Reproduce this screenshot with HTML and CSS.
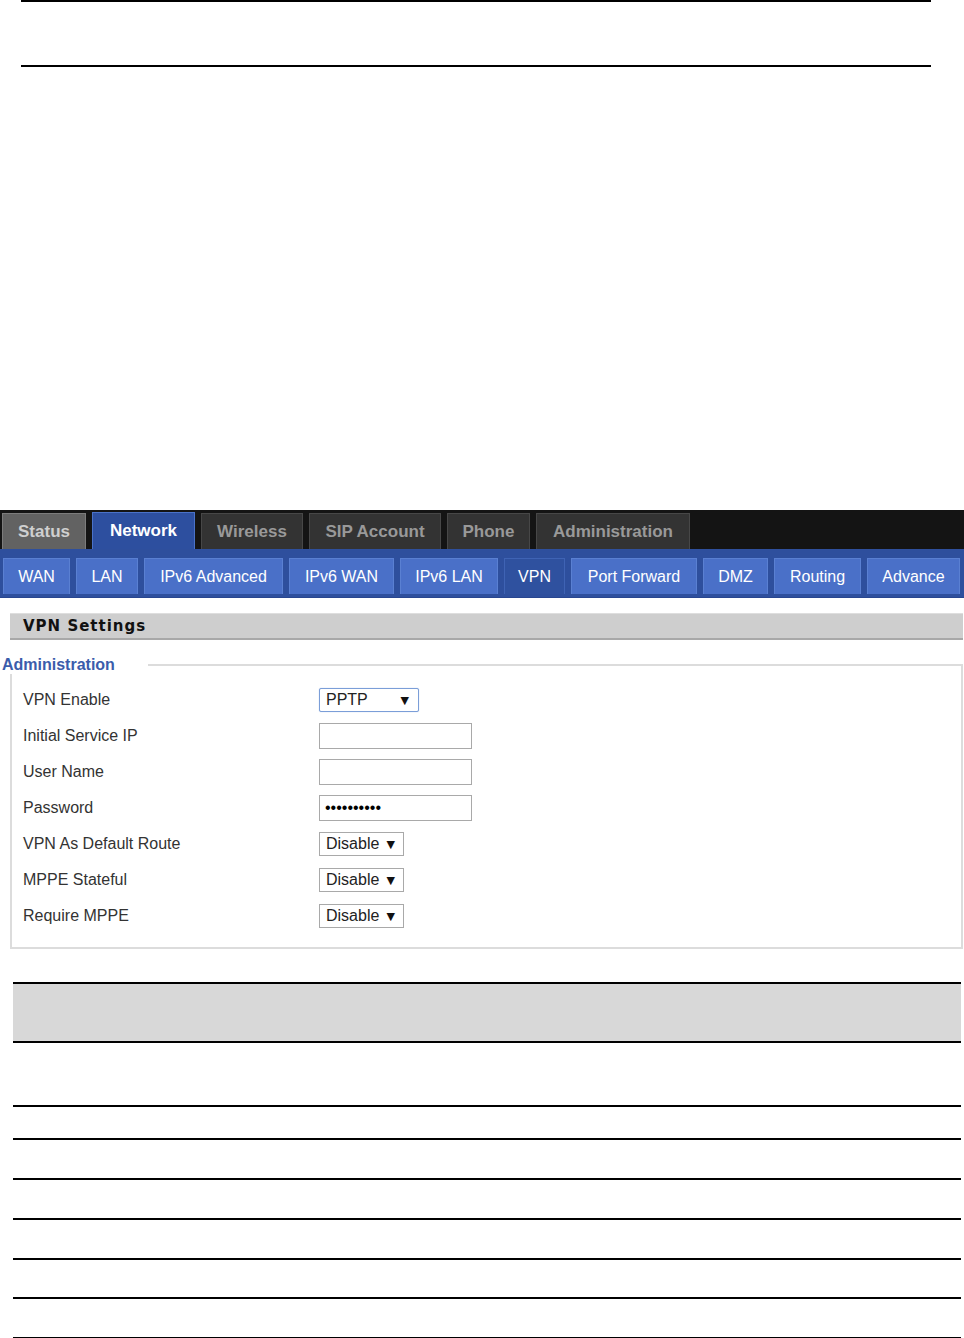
FILE: index.html
```html
<!DOCTYPE html>
<html lang="en">
  <head>
    <meta charset="UTF-8" />
    <title>VPN Settings</title>
    <link rel="stylesheet" href="styles.css">
  </head>
  <body>
    <div class="doc-top"></div>

    <div class="main-nav">
      <a class="tab tab-status">Status</a>
      <a class="tab tab-active">Network</a>
      <a class="tab">Wireless</a>
      <a class="tab">SIP Account</a>
      <a class="tab">Phone</a>
      <a class="tab">Administration</a>
    </div>
    <div class="sub-nav">
      <a class="subtab">WAN</a>
      <a class="subtab">LAN</a>
      <a class="subtab">IPv6 Advanced</a>
      <a class="subtab">IPv6 WAN</a>
      <a class="subtab">IPv6 LAN</a>
      <a class="subtab subtab-active">VPN</a>
      <a class="subtab">Port Forward</a>
      <a class="subtab">DMZ</a>
      <a class="subtab">Routing</a>
      <a class="subtab">Advance</a>
    </div>

    <div class="section-title">VPN Settings</div>

    <fieldset class="admin-box">
      <legend>Administration</legend>
      <div class="form-row">
        <label>VPN Enable</label>
        <div class="select select-focus"><span>PPTP</span><span class="arrow">&#9660;</span></div>
      </div>
      <div class="form-row">
        <label>Initial Service IP</label>
        <input type="text" class="text-input" />
      </div>
      <div class="form-row">
        <label>User Name</label>
        <input type="text" class="text-input" />
      </div>
      <div class="form-row">
        <label>Password</label>
        <input type="password" class="text-input" value="1234567890" />
      </div>
      <div class="form-row">
        <label>VPN As Default Route</label>
        <div class="select"><span>Disable</span><span class="arrow">&#9660;</span></div>
      </div>
      <div class="form-row">
        <label>MPPE Stateful</label>
        <div class="select"><span>Disable</span><span class="arrow">&#9660;</span></div>
      </div>
      <div class="form-row">
        <label>Require MPPE</label>
        <div class="select"><span>Disable</span><span class="arrow">&#9660;</span></div>
      </div>
    </fieldset>

    <div class="doc-table">
      <div class="doc-head"></div>
      <div class="doc-row row-tall"></div>
      <div class="doc-row row-short"></div>
      <div class="doc-row"></div>
      <div class="doc-row"></div>
      <div class="doc-row"></div>
      <div class="doc-row row-39"></div>
      <div class="doc-row"></div>
    </div>
  </body>
</html>
```

FILE: styles.css
```css
body {
  margin: 0;
  font-family: "Liberation Sans", Arial, sans-serif;
  font-size: 16px;
  color: #222;
  background-color: #fff;
}

.doc-top {
  margin: 0 33px 443px 21px;
  height: 63px;
  border-top: 2px solid #000;
  border-bottom: 2px solid #000;
}

/* top menu */
.main-nav {
  display: flex;
  align-items: flex-end;
  height: 39px;
  padding-left: 2px;
  background-color: #141414;
}

.tab {
  box-sizing: border-box;
  display: flex;
  flex-shrink: 0;
  align-items: center;
  justify-content: center;
  height: 36px;
  margin-right: 6px;
  background-color: #333;
  border: 1px solid #474747;
  border-bottom: none;
  color: #999;
  font-weight: bold;
  font-size: 17px;
  white-space: nowrap;
}

.tab:nth-child(1) { width: 84px; }
.tab:nth-child(2) { width: 103px; }
.tab:nth-child(3) { width: 102px; }
.tab:nth-child(4) { width: 132px; }
.tab:nth-child(5) { width: 83px; }
.tab:nth-child(6) { width: 154px; }

.tab-status {
  background-color: #626262;
  border-color: #7c7c7c;
  color: #cfcfcf;
}

.tab-active {
  height: 37px;
  background-color: #2d4f9f;
  border-color: #4a72c8;
  color: #fff;
}

.sub-nav {
  display: flex;
  height: 39px;
  padding: 9px 0 0 3px;
  background-color: #2e4f9d;
  border-bottom: 1px solid #284690;
}

.subtab {
  box-sizing: border-box;
  display: flex;
  flex-shrink: 0;
  align-items: center;
  justify-content: center;
  height: 36px;
  margin-right: 6px;
  background-color: #4a70c8;
  border: 1px solid #5a80d2;
  border-bottom: none;
  color: #fff;
  font-size: 16px;
  white-space: nowrap;
}

.subtab:nth-child(1) { width: 67px; }
.subtab:nth-child(2) { width: 62px; }
.subtab:nth-child(3) { width: 139px; }
.subtab:nth-child(4) { width: 105px; }
.subtab:nth-child(5) { width: 98px; }
.subtab:nth-child(6) { width: 61px; }
.subtab:nth-child(7) { width: 126px; }
.subtab:nth-child(8) { width: 65px; }
.subtab:nth-child(9) { width: 87px; }
.subtab:nth-child(10) { width: 93px; }

.subtab-active {
  background-color: #2f519f;
  border-color: #3f63b4;
}

/* page content */
.section-title {
  margin: 15px 1px 0 10px;
  height: 24px;
  line-height: 25px;
  padding-left: 13px;
  background-color: #cecece;
  border-top: 1px solid #dedede;
  border-bottom: 2px solid #a8a8a8;
  font-family: "DejaVu Sans", Verdana, sans-serif;
  font-size: 15px;
  font-weight: bold;
  letter-spacing: 1px;
  color: #111;
}

.admin-box {
  margin: 16px 1px 0 10px;
  padding: 8px 12px 13px 11px;
  border: 2px solid #dcdcdc;
}

.admin-box legend {
  margin-left: -21px;
  padding: 0 33px 0 0;
  color: #3b5cab;
  font-weight: bold;
  font-size: 16px;
}

.form-row {
  display: flex;
  align-items: center;
  height: 36px;
}

.form-row label {
  width: 296px;
  color: #333;
}

.text-input {
  box-sizing: border-box;
  width: 153px;
  height: 26px;
  margin: 0;
  padding: 0 5px;
  border: 1px solid #a9a9a9;
  font-size: 16px;
  font-family: "Liberation Sans", Arial, sans-serif;
}

.select {
  box-sizing: border-box;
  display: flex;
  align-items: center;
  justify-content: space-between;
  width: 85px;
  height: 24px;
  padding: 0 8px 0 6px;
  border: 1px solid #a9a9a9;
  background-color: #fff;
  color: #222;
}

.select-focus {
  width: 100px;
  border: 1px solid #7b9ed8;
  border-radius: 2px;
  box-shadow: 0 0 1px #9db7e6;
  padding-right: 9px;
}

.arrow {
  font-family: "DejaVu Sans", sans-serif;
  font-size: 11px;
  color: #111;
}

/* empty doc table under the screenshot */
.doc-table {
  margin: 33px 3px 0 13px;
}

.doc-head {
  height: 57px;
  background-color: #d8d8d8;
  border-top: 2px solid #000;
  border-bottom: 2px solid #000;
}

.doc-row {
  height: 38px;
  border-bottom: 2px solid #000;
}

.row-tall {
  height: 62px;
}

.row-short {
  height: 31px;
}

.row-39 {
  height: 37px;
}
```
